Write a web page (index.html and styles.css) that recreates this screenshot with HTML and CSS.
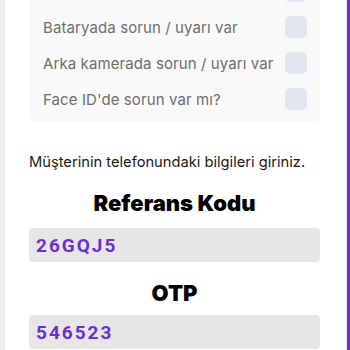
FILE: index.html
```html
<!DOCTYPE html>
<html lang="tr">
<head>
<meta charset="utf-8">
<link rel="stylesheet" href="styles.css">
</head>
<body>
<div class="page">
  <div class="edge"></div>
  <main class="card">
    <section class="checklist">
      <div class="row"><span class="label"></span><span class="box"></span></div>
      <div class="row"><span class="label">Bataryada sorun / uyarı var</span><span class="box"></span></div>
      <div class="row"><span class="label">Arka kamerada sorun / uyarı var</span><span class="box"></span></div>
      <div class="row"><span class="label">Face ID'de sorun var mı?</span><span class="box"></span></div>
    </section>
    <p class="intro">Müşterinin telefonundaki bilgileri giriniz.</p>
    <h2 class="title">Referans Kodu</h2>
    <div class="field">26GQJ5</div>
    <h2 class="title title-otp">OTP</h2>
    <div class="field field-otp">546523</div>
  </main>
  <div class="gap"></div>
  <div class="accent"></div>
</div>
</body>
</html>
```
FILE: styles.css
```css
html, body {
  margin: 0;
  padding: 0;
  background: #f1f1f1;
  font-family: Inter, "Noto Sans", sans-serif;
  overflow: hidden;
}
.page {
  display: flex;
  height: 350px;
}
.edge {
  width: 5px;
  background: #efefef;
}
.card {
  flex: 1;
  background: #ffffff;
  padding: 0 25px 0 24px;
  display: flex;
  flex-direction: column;
}
.gap {
  width: 2px;
  background: #eeeeee;
}
.accent {
  width: 3px;
  background: #6a2fd6;
}
.checklist {
  background: #f9f9fa;
  border-radius: 8px;
  margin-top: -27px;
  padding: 0 13px 5px 14px;
}
.row {
  height: 36px;
  display: flex;
  align-items: center;
  justify-content: space-between;
}
.label {
  font-size: 15px;
  color: #6e6e6e;
  letter-spacing: 0.1px;
  white-space: nowrap;
}
.box {
  flex: none;
  width: 22px;
  height: 22px;
  border-radius: 5px;
  background: #e2e6ee;
}
.intro {
  margin: 29px 0 0;
  font-size: 14.7px;
  line-height: 22px;
  color: #1a1a1a;
  white-space: nowrap;
}
.title {
  margin: 15px 0 0;
  text-align: center;
  font-size: 22px;
  line-height: 30px;
  font-weight: 900;
  color: #000;
}
.title-otp {
  margin-top: 16px;
}
.field {
  margin-top: 10px;
  height: 34px;
  background: #e6e6e6;
  border-radius: 4px;
  padding: 0 7px;
  display: flex;
  align-items: center;
  font-family: Roboto, "Liberation Sans", sans-serif;
  font-weight: 700;
  font-size: 19px;
  letter-spacing: 2px;
  color: #6b2fcf;
}
.field-otp {
  margin-top: 7px;
}
```
